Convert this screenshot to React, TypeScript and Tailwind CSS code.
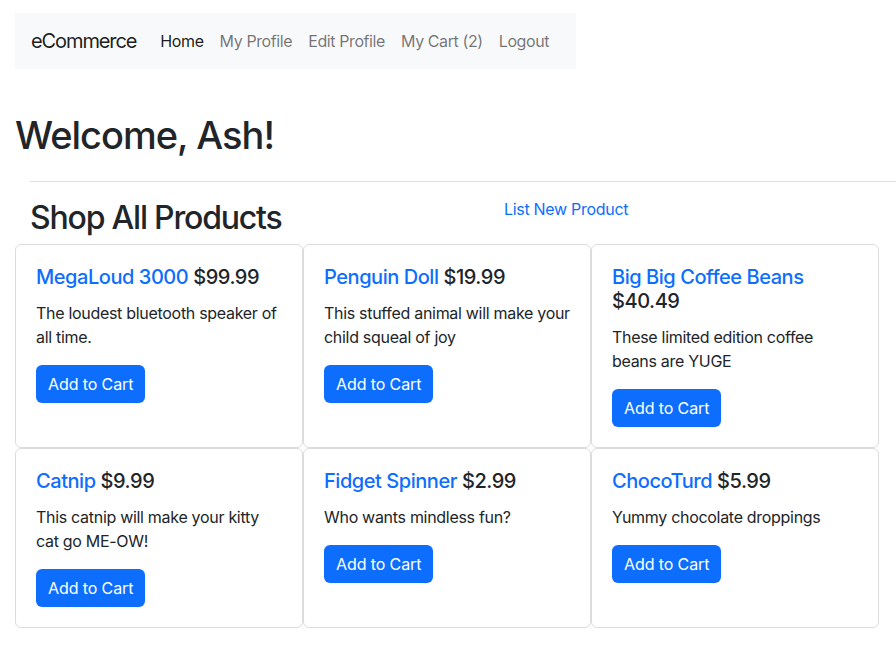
import React from "react";

const products = [
  { name: "MegaLoud 3000", price: "$99.99", desc: "The loudest bluetooth speaker of all time." },
  { name: "Penguin Doll", price: "$19.99", desc: "This stuffed animal will make your child squeal of joy" },
  { name: "Big Big Coffee Beans", price: "$40.49", desc: "These limited edition coffee beans are YUGE" },
  { name: "Catnip", price: "$9.99", desc: "This catnip will make your kitty cat go ME-OW!" },
  { name: "Fidget Spinner", price: "$2.99", desc: "Who wants mindless fun?" },
  { name: "ChocoTurd", price: "$5.99", desc: "Yummy chocolate droppings" },
];

const links = ["Home", "My Profile", "Edit Profile", "My Cart (2)", "Logout"];

export default function App() {
  return (
    <div className="min-h-screen bg-white pt-[13px] font-['Inter',sans-serif] text-[#212529] tracking-[-0.3px] overflow-hidden">
      {/* Navbar */}
      <nav className="ml-[15px] w-[561px] h-14 bg-[#f8f9fa] flex items-center px-4 whitespace-nowrap">
        <a className="text-[20px] leading-[30px] text-black/90 mr-4 tracking-[-1.1px]">eCommerce</a>
        <ul className="flex">
          {links.map((l, i) => (
            <li key={l}>
              <a className={`block px-2 py-2 text-base leading-6 tracking-[-0.4px] ${i === 0 ? "text-black/90" : "text-black/55"}`}>{l}</a>
            </li>
          ))}
        </ul>
      </nav>

      <h1 className="ml-[15px] mt-[42px] text-[38px] leading-[48px] font-medium tracking-[-1px]">Welcome, Ash!</h1>

      <hr className="ml-[30px] mt-[22px] border-0 border-t border-[#dedede]" />

      {/* Section header */}
      <div className="ml-[30px] mt-[15px] flex items-start">
        <h2 className="w-[474px] mt-[2px] text-[32px] leading-[38px] font-medium tracking-[-1.2px]">Shop All Products</h2>
        <a className="text-base leading-6 text-[#0d6efd]">List New Product</a>
      </div>

      {/* Products */}
      <div className="ml-[15px] mt-[7px] w-[864px] grid grid-cols-3">
        {products.map((p) => (
          <div key={p.name} className="border border-[#dcdcdc] rounded-md bg-white p-5">
            <h5 className="text-[20px] leading-6 font-medium mb-3 tracking-[-0.45px]">
              <a className="text-[#0d6efd]">{p.name}</a> {p.price}
            </h5>
            <p className="text-base leading-6 mb-4">{p.desc}</p>
            <button className="bg-[#0d6efd] text-white rounded-md px-3 py-[7px] text-base leading-6 tracking-[-0.1px]">Add to Cart</button>
          </div>
        ))}
      </div>
    </div>
  );
}
